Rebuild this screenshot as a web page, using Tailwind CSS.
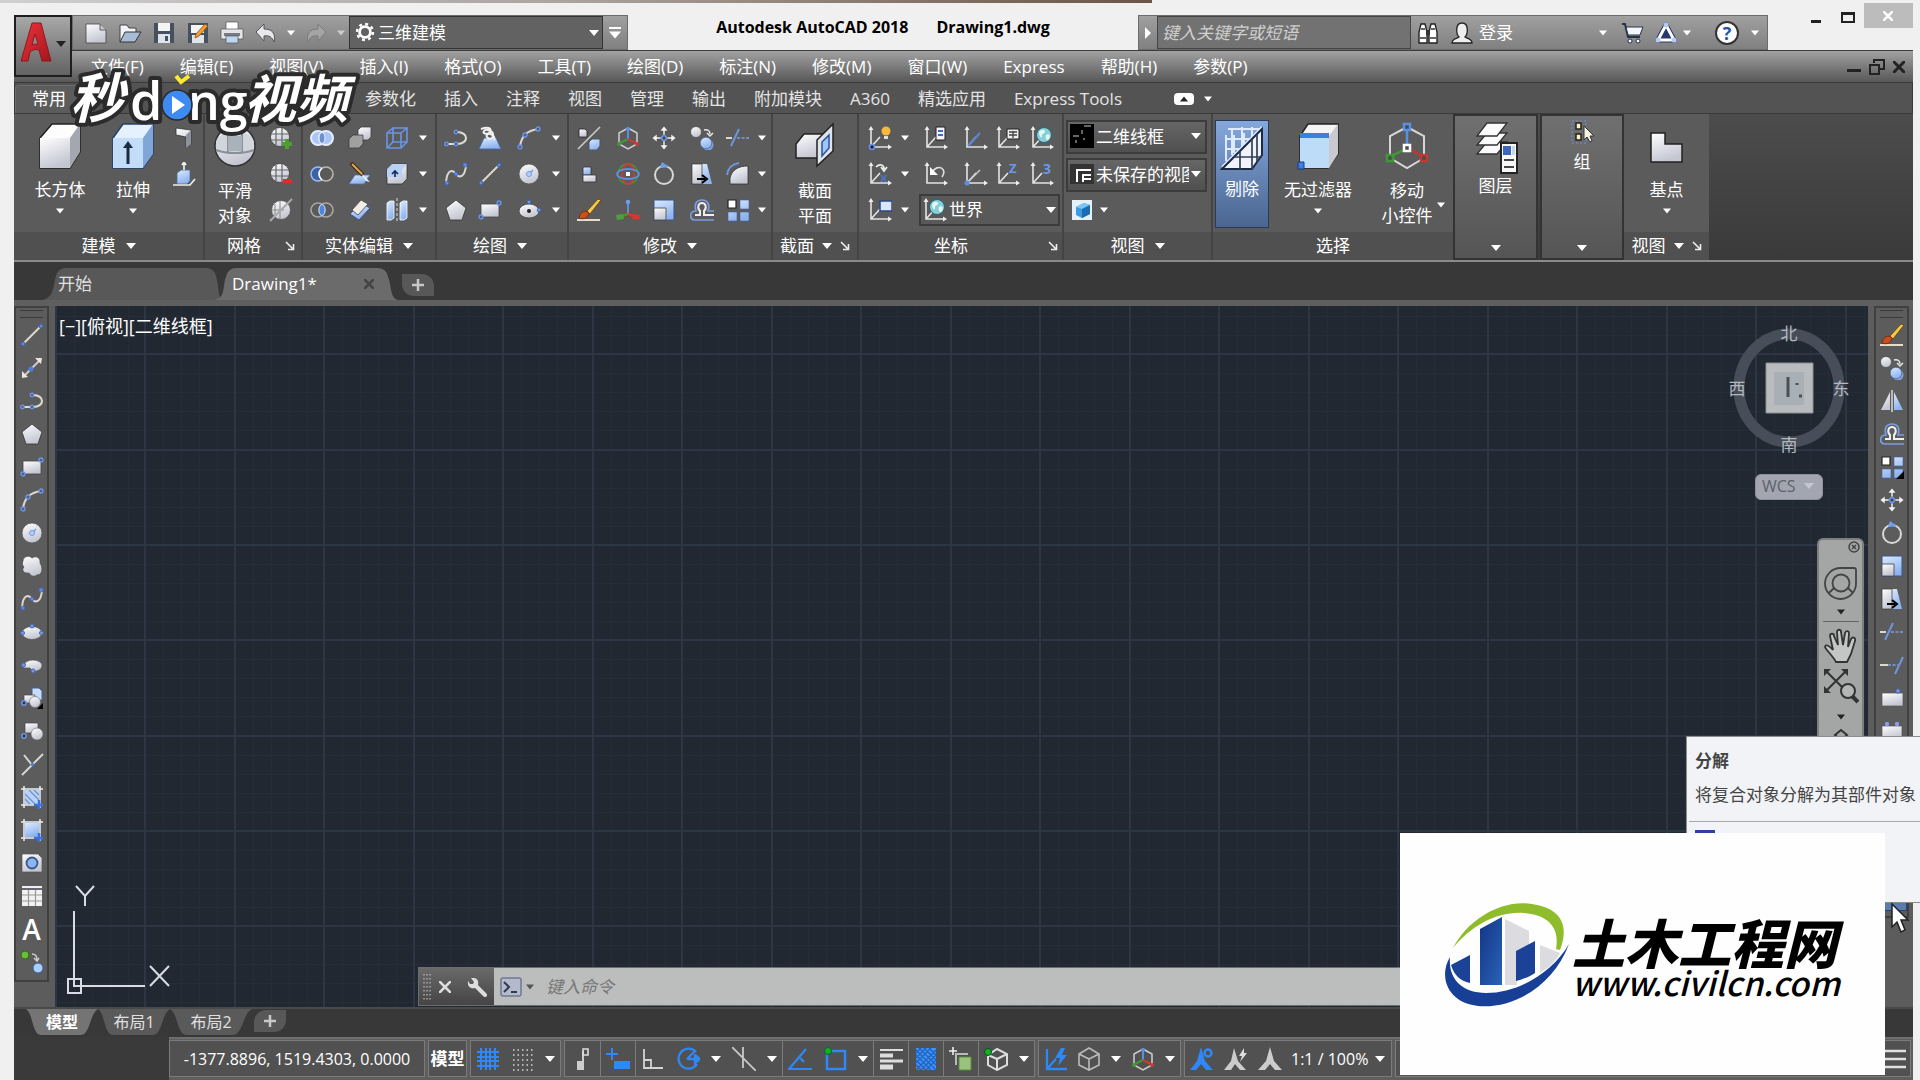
<!DOCTYPE html>
<html lang="zh-CN">
<head>
    <meta charset="UTF-8">
    <meta name="viewport" content="width=device-width, initial-scale=1.0">
    <title>Autodesk AutoCAD 2018 - Drawing1.dwg</title>
    <script src="https://cdn.jsdelivr.net/npm/@tailwindcss/browser@4"></script>
</head>
<body class="relative h-screen overflow-hidden bg-[#f0f0f0] font-['Open_Sans','Noto_Sans_CJK_SC',sans-serif] text-[17px] leading-6 text-white">

    <!-- Иконки -->
    <svg class="absolute h-0 w-0" aria-hidden="true">
        <defs>
            <linearGradient id="gw" x1="0" y1="0" x2="0.4" y2="1"><stop offset="0" stop-color="#fff"/><stop offset="1" stop-color="#c4c6d2"/></linearGradient>
            <linearGradient id="gb" x1="0" y1="0" x2="0.4" y2="1"><stop offset="0" stop-color="#dcebff"/><stop offset="1" stop-color="#8db2ee"/></linearGradient>
            <linearGradient id="gred" x1="0" y1="0" x2="1" y2="1"><stop offset="0" stop-color="#f0333a"/><stop offset="1" stop-color="#a4141c"/></linearGradient>
            <linearGradient id="gtower" x1="0" y1="0" x2="1" y2="1"><stop offset="0" stop-color="#123585"/><stop offset="1" stop-color="#2a62b8"/></linearGradient>
        </defs>
        <symbol id="down" viewBox="0 0 10 6"><path d="M0 0h10L5 6z" fill="currentColor"/></symbol>
        <symbol id="launch" viewBox="0 0 10 10"><path d="M1 1l7 7M8.500 3v5.500H3" fill="none" stroke="#eee" stroke-width="1.600"/></symbol>

        <!-- быстрый доступ -->
        <symbol id="new" viewBox="0 0 24 24"><path d="M2 3h14l6 6v13H2z" fill="url(#gw)" stroke="#444" stroke-width=".8"/><path d="M16 3v6h6" fill="#ccc" stroke="#444" stroke-width=".8"/></symbol>
        <symbol id="open" viewBox="0 0 24 24"><path d="M2 21V4h7l2 3h7v4" fill="#f4f4f8" stroke="#444"/><path d="M2 21l5-10h16l-6 10z" fill="#a9bcd6" stroke="#333"/></symbol>
        <symbol id="save" viewBox="0 0 24 24"><path d="M2 2h20v20H2z" fill="#46505e"/><path d="M6 2h12v8H6z" fill="#f4f4f4"/><path d="M6 13h12v9H6z" fill="#dfe3ea"/><path d="M13 15h3v5h-3z" fill="#46505e"/></symbol>
        <symbol id="saveas" viewBox="0 0 24 24"><path d="M2 2h20v20H2z" fill="#46505e"/><path d="M5 4h13v8H5z" fill="#f4f4f4"/><path d="M6 14h12v8H6z" fill="#dfe3ea"/><path d="M9 17l1-4L19 3l3 2-9 10z" fill="#f0a032" stroke="#8a4a12" stroke-width=".8"/></symbol>
        <symbol id="print" viewBox="0 0 24 24"><path d="M6 1h12v8H6z" fill="#fff" stroke="#555" stroke-width=".7"/><path d="M1 8h22v10H1z" fill="#e4e4e8" stroke="#555" stroke-width=".7"/><path d="M4 12h16v3H4z" fill="#777b86"/><path d="M6 15h12v7H6z" fill="#bcd6f2" stroke="#555" stroke-width=".7"/></symbol>
        <symbol id="undo" viewBox="0 0 24 24"><path d="M2 11l8-8v5c8 0 12 4 10 13-2-5-5-7-10-6v5z" fill="#e8e8ec" stroke="#555"/></symbol>
        <symbol id="redo" viewBox="0 0 24 24"><path d="M22 11l-8-8v5C6 8 2 12 4 21c2-5 5-7 10-6v5z" fill="#a4a4a4" stroke="#7b7b7b"/></symbol>
        <symbol id="gear" viewBox="0 0 24 24"><circle cx="12" cy="12" r="6.500" fill="none" stroke="#fff" stroke-width="3.400"/><circle cx="12" cy="12" r="9.500" fill="none" stroke="#fff" stroke-width="3" stroke-dasharray="3.500 3.960"/></symbol>
        <symbol id="binoc" viewBox="0 0 24 24"><path d="M3 22V11l2-8h4l2 8v11H3zM13 22V11l2-8h4l2 8v11h-8z" fill="#fff" stroke="#222" stroke-width="1.400"/><path d="M10 9h4v5h-4z" fill="#333"/><path d="M5 8h4M15 8h4M4 17h6M14 17h6" stroke="#333" stroke-width="1.300"/></symbol>
        <symbol id="user" viewBox="0 0 24 24"><path d="M2 22c0-4 4-4 7-6-3-3-4-14 3-14s6 11 3 14c3 2 7 2 7 6z" fill="#eee" stroke="#222" stroke-width="1.300"/></symbol>
        <symbol id="cart" viewBox="0 0 24 24"><path d="M2 3h3l3 13h12" fill="none" stroke="#26324a" stroke-width="2"/><path d="M6 6h17l-3 8H8z" fill="#f4f6fb" stroke="#26324a"/><circle cx="10" cy="20" r="2" fill="#fff" stroke="#26324a"/><circle cx="18" cy="20" r="2" fill="#fff" stroke="#26324a"/></symbol>
        <symbol id="cloud" viewBox="0 0 24 24"><g stroke="#26376b" fill="#fff"><path d="M12 4L4 19h16z" stroke-width="5" stroke-linejoin="round"/><path d="M12 4L4 19h16z" fill="#26376b" stroke="#fff" stroke-width="3" stroke-linejoin="round"/></g><circle cx="12" cy="4" r="2.500" fill="#b8caf4"/><circle cx="4" cy="19" r="2.500" fill="#b8caf4"/><circle cx="20" cy="19" r="2.500" fill="#b8caf4"/></symbol>

        <!-- рисование -->
        <symbol id="line" viewBox="0 0 24 24"><path d="M3 21L21 3" stroke="#ddd8cf" stroke-width="2"/><g fill="#6a8cd8" stroke="#3b5dae"><circle cx="3" cy="21" r="2"/><circle cx="21" cy="3" r="2"/></g></symbol>
        <symbol id="xline" viewBox="0 0 24 24"><path d="M5 19L19 5" stroke="#ccc" stroke-width="2"/><path d="M2 22v-7l6 6zM22 2h-7l6 6z" fill="#eee6d8"/><circle cx="11" cy="13" r="2.500" fill="#4d7fe0"/></symbol>
        <symbol id="pline" viewBox="0 0 24 24"><path d="M2 18h11c12 0 12-12 0-12" fill="none" stroke="#e0dcd4" stroke-width="2"/><g fill="#50607e" stroke="#6d94ea" stroke-width="1.300"><circle cx="2.500" cy="18" r="1.800"/><circle cx="12" cy="18" r="1.800"/><circle cx="12" cy="6" r="1.800"/></g></symbol>
        <symbol id="polygon" viewBox="0 0 24 24"><path d="M12 2l10 8-4 12H6L2 10z" fill="url(#gw)" stroke="#333" stroke-width=".8"/></symbol>
        <symbol id="rect" viewBox="0 0 24 24"><path d="M3 6h18v13H3z" fill="url(#gw)" stroke="#444" stroke-width=".8"/><g fill="#50607e" stroke="#6d94ea" stroke-width="1.300"><circle cx="3" cy="19" r="2"/><circle cx="21" cy="5" r="2"/></g></symbol>
        <symbol id="arc" viewBox="0 0 24 24"><path d="M3 21C4 10 11 4 22 3" fill="none" stroke="#ddd8cf" stroke-width="2"/><g fill="#50607e" stroke="#6d94ea" stroke-width="1.300"><circle cx="3" cy="21" r="2"/><circle cx="8" cy="9" r="2"/><circle cx="21" cy="3" r="2"/></g></symbol>
        <symbol id="circle" viewBox="0 0 24 24"><circle cx="12" cy="12" r="10" fill="url(#gw)" stroke="#555" stroke-width=".7"/><path d="M12 12l4-4" stroke="#6f9be6" stroke-width="1.500"/><circle cx="12" cy="12" r="2.500" fill="#b6d2f6" stroke="#6f9be6"/></symbol>
        <symbol id="revcloud" viewBox="0 0 24 24"><path d="M3 7c0-5 7-6 9-3 4-3 9 0 8 5 3 4 3 12-3 12-4 3-7 0-8-2-5 1-8-3-5-6-2-2-2-4-1-6z" fill="url(#gw)" stroke="#444" stroke-width=".7"/></symbol>
        <symbol id="spline" viewBox="0 0 24 24"><path d="M2 21C3 6 9 8 12 12s9 4 10-9" fill="none" stroke="#ddd8cf" stroke-width="2"/><g fill="#6a8cd8" stroke="#3b6dde"><circle cx="3" cy="21" r="1.800"/><circle cx="12" cy="12" r="1.800"/><circle cx="21" cy="3" r="2"/></g></symbol>
        <symbol id="ellipse" viewBox="0 0 24 24"><ellipse cx="12" cy="13" rx="10" ry="6.500" fill="url(#gw)" stroke="#555" stroke-width=".7"/><g fill="#7a98dc" stroke="#4466b4"><circle cx="2.500" cy="13" r="2"/><circle cx="12" cy="6" r="2"/><circle cx="21.500" cy="13" r="2"/></g></symbol>
        <symbol id="ellipse2" viewBox="0 0 24 24"><ellipse cx="12" cy="13" rx="10" ry="7" fill="url(#gw)" stroke="#444" stroke-width=".8"/><circle cx="12" cy="13" r="2" fill="#222"/><g fill="#7a98dc" stroke="#4466b4"><circle cx="12" cy="4" r="1.800"/><circle cx="22" cy="12" r="1.800"/></g></symbol>
        <symbol id="earc" viewBox="0 0 24 24"><path d="M4 12c2-7 17-6 18 0 0 5-5 7-10 6l-2-3H3z" fill="url(#gw)" stroke="#555" stroke-width=".7"/><g fill="#7a98dc" stroke="#4466b4"><circle cx="3.500" cy="12" r="2"/><circle cx="13" cy="18" r="2"/></g></symbol>
        <symbol id="insert" viewBox="0 0 24 24"><path d="M12 2h7l3 3v9H12z" fill="#c6defc" stroke="#44608c"/><path d="M4 9h11v8H4z" fill="url(#gw)" stroke="#444" stroke-width=".7"/><circle cx="15" cy="16" r="5.500" fill="url(#gw)" stroke="#666" stroke-width=".6"/><circle cx="4" cy="17" r="2.200" fill="#333" stroke="#6d94ea" stroke-width="1.500"/><path d="M23 17v6h-6z" fill="#000"/></symbol>
        <symbol id="block" viewBox="0 0 24 24"><path d="M5 4h13v10H5z" fill="url(#gw)" stroke="#444" stroke-width=".7"/><circle cx="17" cy="15" r="6" fill="url(#gw)" stroke="#666" stroke-width=".6"/><circle cx="4" cy="17" r="2.200" fill="#333" stroke="#6d94ea" stroke-width="1.500"/></symbol>
        <symbol id="point" viewBox="0 0 24 24"><path d="M2 23L23 2M4 3l8 10" stroke="#d5d5d5" stroke-width="2"/><circle cx="12.500" cy="12.500" r="1.800" fill="#4d7fe0"/></symbol>
        <symbol id="hatch" viewBox="0 0 24 24"><path d="M5 5h14v14H5z" fill="#b9d3fa"/><path d="M5 9l10 10M9 5l10 10M5 14l5 5M14 5l5 5" stroke="#6d90c8" stroke-width="1.200"/><path d="M1 4h22M4 1v22M20 1v22M1 20h22" stroke="#eee" stroke-width="1.500"/><path d="M14 20h9M19 15v9" stroke="#3b72dc" stroke-width="2.500"/></symbol>
        <symbol id="gradient" viewBox="0 0 24 24"><path d="M5 5h14v14H5z" fill="url(#gb)"/><path d="M1 4h22M4 1v22M20 1v22M1 20h22" stroke="#eee" stroke-width="1.500"/><path d="M14 20h9M19 15v9" stroke="#3b72dc" stroke-width="2.500"/></symbol>
        <symbol id="region" viewBox="0 0 24 24"><path d="M2 3h16l4 4v14H2z" fill="url(#gw)" stroke="#555" stroke-width=".7"/><circle cx="12" cy="12" r="5.500" fill="#8bb6f4" stroke="#3c5688" stroke-width="1.800"/></symbol>
        <symbol id="table" viewBox="0 0 24 24"><path d="M2 2h20v20H2z" fill="#f1f1f1"/><path d="M2 5h20" stroke="#667" stroke-width="2"/><path d="M2 11h20M2 17h20M8.500 6v16M15.500 6v16" stroke="#999" stroke-width="1.200"/></symbol>
        <symbol id="addsel" viewBox="0 0 24 24"><circle cx="5" cy="5" r="4" fill="#6dbb3c" stroke="#2f6b16"/><circle cx="18" cy="18" r="5" fill="#a8d0fb" stroke="#39618f"/><path d="M12 4c4 0 5 2 5 6m-3-2l3 3 2-3" fill="none" stroke="#ccc" stroke-width="1.500"/></symbol>
        <symbol id="helix" viewBox="0 0 24 24"><path d="M6 12h12l5 11H1z" fill="url(#gb)" stroke="#3f66a8" stroke-width=".8"/><g fill="none" stroke="#f1f1f1" stroke-width="2"><path d="M3 3c8-3 11 0 9 3S4 8 6 5s10 0 9 5-8 2-6-1 9 1 7 5"/></g></symbol>

        <!-- редактирование -->
        <symbol id="erase" viewBox="0 0 24 24"><path d="M0 22h23" stroke="#e8dcc8" stroke-width="2"/><path d="M10 13L21 1l3 1-11 14z" fill="#f5c64a" stroke="#5d3a10" stroke-width=".8"/><path d="M2 20c1-6 6-9 10-5-1 5-5 7-10 5z" fill="#c8501c" stroke="#6c2308" stroke-width=".8"/></symbol>
        <symbol id="copy" viewBox="0 0 24 24"><circle cx="6" cy="6" r="5.500" fill="url(#gw)" stroke="#444" stroke-width=".7"/><circle cx="18" cy="19" r="5.500" fill="#7d9fdc"/><circle cx="16" cy="17" r="5.800" fill="url(#gb)" stroke="#46648f" stroke-width=".7"/><path d="M14 4c4-1 6 1 6 4m-3-1l3 3 3-3" fill="none" stroke="#e6e6e6" stroke-width="1.500"/></symbol>
        <symbol id="mirror" viewBox="0 0 24 24"><path d="M10 3v18H1z" fill="url(#gw)"/><path d="M14 3v18h9z" fill="url(#gb)"/><path d="M12 1v22" stroke="#ddd" stroke-width="1.500"/></symbol>
        <symbol id="offset" viewBox="0 0 24 24"><path d="M24 13h-6c2-6 0-11-6-11S4 7 6 13c-7 0-7 9-1 9h19" fill="none" stroke="#7b9de0" stroke-width="1.700"/><path d="M24 17h-10v-4c3-3 2-8-2-8s-5 5-2 8v4H5" fill="none" stroke="#eee" stroke-width="2"/></symbol>
        <symbol id="array" viewBox="0 0 24 24"><path d="M2 2h8v8H2z" fill="#fff" stroke="#222" stroke-width="1.200"/><path d="M14 2h9v9h-9zM2 14h9v9H2zM14 14h9v9h-9z" fill="url(#gb)" stroke="#41629a" stroke-width=".6"/></symbol>
        <symbol id="arrayd" viewBox="0 0 24 24"><path d="M2 2h8v8H2z" fill="#fff" stroke="#222" stroke-width="1.200"/><path d="M14 2h9v9h-9zM2 14h9v9H2zM14 14h9v9h-9z" fill="url(#gb)" stroke="#41629a" stroke-width=".6"/><path d="M24 16v8h-8z" fill="#000"/></symbol>
        <symbol id="move" viewBox="0 0 24 24"><path d="M12 0l4 5h-3v4h-2V5H8zM12 24l4-5h-3v-4h-2v4H8zM0 12l5-4v3h4v2H5v3zM24 12l-5-4v3h-4v2h4v3z" fill="#f2f2f2" stroke="#444" stroke-width=".5"/><circle cx="12" cy="12" r="2.300" fill="#344" stroke="#6d94ea" stroke-width="1.600"/></symbol>
        <symbol id="rotate" viewBox="0 0 24 24"><circle cx="12" cy="13" r="9" fill="none" stroke="#d8d8d8" stroke-width="2"/><path d="M8 6l2-6 7 5z" fill="#6ea0f0"/></symbol>
        <symbol id="scale" viewBox="0 0 24 24"><path d="M2 2h20v20H2z" fill="url(#gb)" stroke="#35568f"/><path d="M2 10h12v12H2z" fill="url(#gw)" stroke="#444" stroke-width=".8"/></symbol>
        <symbol id="stretch" viewBox="0 0 24 24"><path d="M11 2h6l5 20H11z" fill="url(#gb)"/><path d="M2 2h10v20H2z" fill="url(#gw)" stroke="#333" stroke-width=".7"/><path d="M7 17h8m-3-4l5 4-5 4" stroke="#000" stroke-width="2" fill="none"/></symbol>
        <symbol id="trim" viewBox="0 0 24 24"><path d="M0 12h6" stroke="#ddd8cf" stroke-width="2"/><path d="M5 20l8-17" stroke="#6f95dc" stroke-width="2"/><path d="M11 12h13" stroke="#7da0dd" stroke-width="1.600" stroke-dasharray="3 1.500"/></symbol>
        <symbol id="extend" viewBox="0 0 24 24"><path d="M0 12h8" stroke="#ddd8cf" stroke-width="2"/><path d="M15 21l8-17" stroke="#6f95dc" stroke-width="2"/><path d="M8 12h10" stroke="#7da0dd" stroke-width="1.600" stroke-dasharray="3 1.500"/></symbol>
        <symbol id="brk1" viewBox="0 0 24 24"><path d="M2 7h21v13H2z" fill="url(#gw)" stroke="#555" stroke-width=".7"/><circle cx="18" cy="5" r="2.200" fill="#7a9ae0" stroke="#3f5fae"/></symbol>
        <symbol id="brk2" viewBox="0 0 24 24"><path d="M2 7h20v13H2z" fill="url(#gw)" stroke="#555" stroke-width=".7"/><g fill="#8a9ce8"><circle cx="7" cy="5" r="2.200"/><circle cx="17" cy="5" r="2.200"/></g></symbol>
        <symbol id="fillet" viewBox="0 0 24 24"><path d="M4 22V16C6 8 12 4 22 4v18z" fill="url(#gw)" stroke="#333" stroke-width=".8"/><path d="M1 13C2 6 6 2 13 1" fill="none" stroke="#6f95dc" stroke-width="1.800"/></symbol>
        <symbol id="m3d" viewBox="0 0 24 24"><path d="M1 23L23 1" stroke="#ccc" stroke-width="1.600"/><path d="M2 3h6l2 2v6H2z" fill="url(#gw)" stroke="#222" stroke-width=".8"/><path d="M12 16l3-3h8v7l-3 4h-8z" fill="url(#gb)" stroke="#456"/></symbol>
        <symbol id="gizmo" viewBox="0 0 24 24"><path d="M12 2l9 5v11l-9 5-9-5V7z" fill="none" stroke="#cfcfcf" stroke-width="1.500"/><path d="M12 3v10" stroke="#5b8fe6" stroke-width="2"/><path d="M12 13l-8 4" stroke="#3d9a34" stroke-width="2"/><path d="M12 13l8 4" stroke="#d03a32" stroke-width="2"/><circle cx="12" cy="3" r="2" fill="#5b8fe6"/><circle cx="3" cy="18" r="2" fill="#3d9a34"/><circle cx="21" cy="18" r="2" fill="#d03a32"/></symbol>
        <symbol id="orbit" viewBox="0 0 24 24"><circle cx="12" cy="12" r="10" fill="none" stroke="#3d9a34" stroke-width="1.500"/><ellipse cx="12" cy="12" rx="6" ry="10" fill="none" stroke="#d03a32" stroke-width="1.800"/><ellipse cx="12" cy="12" rx="11" ry="5" fill="none" stroke="#5b8fe6" stroke-width="1.800"/><path d="M10 10h4v4h-4z" fill="#fff"/></symbol>
        <symbol id="scale3" viewBox="0 0 24 24"><path d="M12 9l7 11H5z" fill="#7a4a3c"/><path d="M12 4v12" stroke="#5b8fe6" stroke-width="2"/><path d="M12 16l-9 3" stroke="#3d9a34" stroke-width="2.500"/><path d="M12 16l9 3" stroke="#d03a32" stroke-width="2.500"/><path d="M0 17l7-1 1 5-7 1z" fill="#4aa23a"/><path d="M17 16l7 1-1 5-7-1z" fill="#d8352e"/><circle cx="12" cy="4" r="2.300" fill="#6f9be8"/></symbol>
        <symbol id="align" viewBox="0 0 24 24"><path d="M6 5h8v8H6z" fill="url(#gb)" stroke="#333" stroke-width=".8"/><path d="M6 13h13v7H6z" fill="url(#gw)" stroke="#333" stroke-width=".8"/></symbol>

        <!-- тела и сети -->
        <symbol id="polysolid" viewBox="0 0 24 24"><path d="M4 2l15 2v14l-5 4V11L4 9z" fill="url(#gw)" stroke="#333" stroke-width=".8"/><path d="M14 9l5-5v14l-5 4z" fill="#8d929c"/></symbol>
        <symbol id="presspull" viewBox="0 0 24 24"><path d="M5 11l4-3h9v11l-3 3H5z" fill="url(#gb)" stroke="#49648d" stroke-width=".8"/><path d="M12 8V1m-2 2l2-3 2 3M1 23h17l5-6" stroke="#eee" stroke-width="1.700" fill="none"/></symbol>
        <symbol id="ball" viewBox="0 0 24 24"><circle cx="11" cy="11" r="9.500" fill="url(#gw)" stroke="#333" stroke-width=".7"/><path d="M2 8h18M2 14h18M7 3v16M13 2v18" stroke="#666" stroke-width="1.200"/></symbol>
        <symbol id="meshplus" viewBox="0 0 24 24"><use href="#ball"/><path d="M18 13v10M13 18h10" stroke="#4f9e34" stroke-width="4"/></symbol>
        <symbol id="meshminus" viewBox="0 0 24 24"><use href="#ball"/><path d="M14 19h9" stroke="#d6302a" stroke-width="4"/></symbol>
        <symbol id="meshref" viewBox="0 0 24 24"><circle cx="12" cy="12" r="9.500" fill="url(#gw)" stroke="#555" stroke-width=".8"/><path d="M6 6v11M11 3v18M3 12h12" stroke="#888"/><path d="M1 23L23 1" stroke="#aaa" stroke-width="2"/></symbol>
        <symbol id="union" viewBox="0 0 24 24"><g fill="#a9c6f6" stroke="#e6eefc" stroke-width="2"><circle cx="8" cy="12" r="7"/><circle cx="16" cy="12" r="7"/></g><ellipse cx="12" cy="12" rx="3" ry="5.500" fill="#6d90d0" stroke="#e6eefc"/></symbol>
        <symbol id="subtract" viewBox="0 0 24 24"><circle cx="8" cy="12" r="7" fill="#3c62a8" stroke="#9bbcf2" stroke-width="1.500"/><circle cx="16" cy="12" r="7" fill="#5a5a5a" stroke="#bdb6ac" stroke-width="1.600"/><path d="M12 6c-4 4-4 8 0 12" fill="none" stroke="#fff" stroke-width="1.400"/></symbol>
        <symbol id="intersect" viewBox="0 0 24 24"><g fill="none" stroke="#aaa6a0" stroke-width="1.600"><circle cx="8" cy="12" r="7"/><circle cx="16" cy="12" r="7"/></g><ellipse cx="12" cy="12" rx="3" ry="5.500" fill="#4c84e0" stroke="#bcd4fa"/></symbol>
        <symbol id="extract" viewBox="0 0 24 24"><path d="M10 4l3-3h10v10l-3 3H10z" fill="url(#gw)" stroke="#333" stroke-width=".7"/><path d="M1 13l4-4h10v9l-4 4H1z" fill="#a0a0a0" stroke="#333" stroke-width=".7"/></symbol>
        <symbol id="slice" viewBox="0 0 24 24"><path d="M1 22l6-9h15l-6 9z" fill="url(#gb)" stroke="#4b6ea8" stroke-width=".8"/><path d="M3 1l12 12" stroke="#3b2a14" stroke-width="4"/><path d="M4 2l10 10" stroke="#e0a94e" stroke-width="2"/><path d="M13 11l9 9-4-1z" fill="#f4f4f4"/></symbol>
        <symbol id="thicken" viewBox="0 0 24 24"><path d="M2 16L13 5l9 5-11 12z" fill="url(#gb)" stroke="#35568f"/><path d="M4 12l9-10 7 4-10 11z" fill="#f1ede4" stroke="#444" stroke-width=".8"/></symbol>
        <symbol id="wire" viewBox="0 0 24 24"><path d="M2 7h14v15H2zM8 2h14v14H8zM2 7l6-5M16 7l6-5M16 22l6-6M2 22l6-6" fill="none" stroke="#6c94e6" stroke-width="1.600"/></symbol>
        <symbol id="shell" viewBox="0 0 24 24"><path d="M2 7l5-5h15v15l-5 5H2z" fill="url(#gw)" stroke="#333" stroke-width=".8"/><path d="M2 7l5-5h15l-4 5zM2 7h15v8H2z" fill="#b7d0f5"/><path d="M10 15V9m-3 3l3-3 3 3" fill="none" stroke="#1c2c50" stroke-width="1.700"/></symbol>
        <symbol id="separate" viewBox="0 0 24 24"><path d="M2 5l3-2h4v17l-3 2H2z" fill="url(#gb)" stroke="#fff" stroke-width=".8"/><path d="M15 5l3-2h4v17l-3 2h-4z" fill="url(#gb)" stroke="#fff" stroke-width=".8"/><path d="M12 0v24" stroke="#ddd" stroke-dasharray="3 2"/></symbol>

        <!-- ПСК -->
        <symbol id="axes" viewBox="0 0 24 24"><path d="M3 2v19h19M3 21l9-10" fill="none" stroke="#e4e4e4" stroke-width="1.600"/><path d="M3 0l2.500 4h-5zM24 21l-4-2.500v5z" fill="#eee"/></symbol>
        <symbol id="ucs3p" viewBox="0 0 24 24"><use href="#axes"/><circle cx="4" cy="21" r="2.500" fill="#223" stroke="#6d94ea" stroke-width="1.600"/><circle cx="18" cy="5" r="4.500" fill="#f7b93c"/><path d="M16 10h4v3h-4z" fill="#ddd"/></symbol>
        <symbol id="ucsname" viewBox="0 0 24 24"><use href="#axes"/><path d="M12 1h9v13h-9z" fill="#f4f4f4" stroke="#222"/><path d="M14 5h5M14 9h5" stroke="#3b6cc8" stroke-width="2"/></symbol>
        <symbol id="ucsz" viewBox="0 0 24 24"><use href="#axes"/><path d="M4 20L16 7" stroke="#5a86d6" stroke-width="2"/></symbol>
        <symbol id="ucsicon" viewBox="0 0 24 24"><use href="#axes"/><path d="M11 3h12v10H11z" fill="#eee" stroke="#222"/><path d="M13 6h8M13 9h8M17 5v7" stroke="#444" stroke-width="1.300"/></symbol>
        <symbol id="ucsworld" viewBox="0 0 24 24"><use href="#axes"/><circle cx="14" cy="9" r="7.500" fill="#86cfd8" stroke="#2d5f74"/><path d="M9 6c3-4 7-2 6 0s-3 1-3 4-3 1-3-4zM16 9c3-2 5 1 3 4s-4-1-3-4z" fill="#e4f6f2"/></symbol>
        <symbol id="ucsx" viewBox="0 0 24 24"><use href="#axes"/><path d="M8 5c4-4 8-2 8 2m-3-2l3 4 3-4" fill="none" stroke="#f1f1f1" stroke-width="1.700"/><text x="12" y="20" font-size="13" font-weight="700" fill="#4d74b8">x</text></symbol>
        <symbol id="ucsprev" viewBox="0 0 24 24"><path d="M3 2v19h19" fill="none" stroke="#e4e4e4" stroke-width="1.600"/><path d="M3 0l2.500 4h-5zM24 21l-4-2.500v5z" fill="#eee"/><path d="M8 10c6-9 16-3 10 5" fill="none" stroke="#ddd" stroke-width="1.700"/><path d="M6 5v8h8z" fill="#fff"/></symbol>
        <symbol id="ucsorg" viewBox="0 0 24 24"><use href="#axes"/><path d="M3 21L16 8" stroke="#ccc" stroke-width="1.400"/><circle cx="3" cy="21" r="2.500" fill="#5b8fe6"/></symbol>
        <symbol id="ucszz" viewBox="0 0 24 24"><use href="#axes"/><text x="13" y="11" font-size="13" font-weight="700" fill="#6a98ec">Z</text></symbol>
        <symbol id="ucs3" viewBox="0 0 24 24"><use href="#axes"/><text x="13" y="12" font-size="14" font-weight="700" fill="#6a98ec">3</text></symbol>
        <symbol id="ucsview" viewBox="0 0 24 24"><use href="#axes"/><path d="M12 3h12v10H12z" fill="#d9e6fb" stroke="#2c4a86" stroke-width="1.500"/></symbol>

        <!-- большие кнопки -->
        <symbol id="box" viewBox="0 0 44 48"><path d="M2 16L14 2h28v28L32 46H2z" fill="#fdfdfd" stroke="#222" stroke-width="1.500"/><path d="M2 16h30v30H2z" fill="url(#gw)"/><path d="M32 16L42 2v28L32 46z" fill="#a5a7b0"/></symbol>
        <symbol id="extrude" viewBox="0 0 44 48"><path d="M2 16L12 2h30v30L32 46H2z" fill="#e6f1ff" stroke="#22406e" stroke-width="1.500"/><path d="M2 16h30v30H2z" fill="#c3dcf8"/><path d="M32 16L42 2v30L32 46z" fill="#7fa6d6"/><path d="M17 42V24" stroke="#1d2b44" stroke-width="3"/><path d="M12 26l5-7 5 7z" fill="#1d2b44"/></symbol>
        <symbol id="smooth" viewBox="0 0 44 48"><circle cx="22" cy="24" r="20" fill="url(#gw)" stroke="#333" stroke-width="1.500"/><path d="M3 20c4-14 34-14 38 0v8C30 32 14 32 3 28z" fill="#d0d6dc"/><path d="M15 12v18M29 12v18M3 28c10 4 28 4 38 0" fill="none" stroke="#8a9098" stroke-width="2"/><path d="M15 14h14v15H15z" fill="#a9b1ba"/></symbol>
        <symbol id="section" viewBox="0 0 44 48"><path d="M3 22l8-10h22v20l-6 4H3z" fill="url(#gw)" stroke="#222" stroke-width="1.500"/><path d="M24 18L40 2v27L24 44z" fill="#dfe3ea" stroke="#222" stroke-width="1.500"/><path d="M29 20l7-7v13l-7 8z" fill="#9fc6f8" stroke="#29539a" stroke-width="1.500"/></symbol>
        <symbol id="cull" viewBox="0 0 44 48"><path d="M12 4v26M22 2v30M32 2v14M6 10v26M14 10v18M24 8v12M6 14h24M8 4h34M6 24h16M10 34l8-6M2 42L42 2" fill="none" stroke="#dfeaff" stroke-width="2"/><path d="M2 44L42 4v26L32 44z" fill="#f1f3f8" stroke="#1c2a44" stroke-width="2"/><path d="M20 26v18M32 14v30M14 32h28M37 9v28" stroke="#33405c" stroke-width="1.700"/></symbol>
        <symbol id="nofilter" viewBox="0 0 44 48"><path d="M4 14L12 2h30v30L32 46H4z" fill="#f4f4f4" stroke="#222" stroke-width="1.500"/><path d="M4 14h29v32H4z" fill="#bcdcf8"/><path d="M33 14L42 2v30l-9 14z" fill="#c9c9cf"/><path d="M4 11h29v5H4z" fill="#3d7de6"/><path d="M2 40h6v7H2z" fill="#3d7de6" stroke="#1b3c78"/></symbol>
        <symbol id="gizmobig" viewBox="0 0 44 48"><path d="M22 5l17 9v22l-17 10L5 36V14z" fill="none" stroke="#d6d6d6" stroke-width="2"/><path d="M22 5v21" stroke="#5b8fe6" stroke-width="2.500"/><path d="M22 26L5 35" stroke="#3d9a34" stroke-width="2.500"/><path d="M22 26l17 9" stroke="#c03a32" stroke-width="2.500"/><g fill="#4a4a4a" stroke-width="2.500"><path d="M19 2h6v6h-6z" stroke="#5b8fe6"/><path d="M2 33h6v6H2z" stroke="#3d9a34"/><path d="M36 33h6v6h-6z" stroke="#c03a32"/><path d="M19 23h6v6h-6z" stroke="#fff"/></g></symbol>
        <symbol id="layers" viewBox="0 0 44 54"><g fill="#fafafa" stroke="#333" stroke-width="1.300"><path d="M3 34l10-12h20L23 34z"/><path d="M3 25l10-12h20L23 25z"/><path d="M3 16L13 3h20L23 16z"/></g><path d="M27 23h16v30H27z" fill="#f7f7f7" stroke="#222" stroke-width="2"/><path d="M29 26h8v9h-8z" fill="#3a66c0"/><path d="M38 26h3v9h-3z" fill="#c8d4e8"/><path d="M30 40h10M30 47h10" stroke="#444" stroke-width="2"/></symbol>
        <symbol id="group" viewBox="0 0 24 24"><path d="M2 1h14v22H2z" fill="none" stroke="#6c94e6" stroke-dasharray="2 2"/><path d="M6 3h5v6H6zM6 14h5v6H6z" fill="#fff3c0" stroke="#222" stroke-width="1.500"/><path d="M14 6v14l3-3 3 5 2-1-2-5h4z" fill="#f4f4e0" stroke="#333"/></symbol>
        <symbol id="basept" viewBox="0 0 44 48"><path d="M6 11h14v11h17v18H6z" fill="url(#gw)" stroke="#222" stroke-width="1.500"/></symbol>

        <!-- строка состояния -->
        <symbol id="sgrid" viewBox="0 0 24 24"><path d="M5 1v22M10 1v22M14 1v22M19 1v22M1 5h22M1 10h22M1 14h22M1 19h22" stroke="#2f88f5" stroke-width="2"/></symbol>
        <symbol id="sdots" viewBox="0 0 24 24"><path d="M3 3h20M3 8h20M3 13h20M3 18h20M3 23h20" stroke="#d6d6d6" stroke-width="1.500" stroke-dasharray="1.500 3"/></symbol>
        <symbol id="sinfer" viewBox="0 0 24 24"><path d="M12 15V4" stroke="#ddd" stroke-width="1.800"/><path d="M12 2h5v6h-5z" fill="none" stroke="#ddd" stroke-width="1.600"/><path d="M6 14h7v9H6z" fill="#ccc"/></symbol>
        <symbol id="sdyn" viewBox="0 0 24 24"><path d="M6 1v12M0 7h12" stroke="#2f88f5" stroke-width="2"/><path d="M8 14h16v8H8z" fill="#2f88f5"/></symbol>
        <symbol id="sortho" viewBox="0 0 24 24"><path d="M3 2v19h19M3 13h7v8" fill="none" stroke="#d4d4d4" stroke-width="1.800"/></symbol>
        <symbol id="spolar" viewBox="0 0 24 24"><path d="M20 5a10 10 0 1 0 1 12M11 12h13M11 12l8-8M24 12l-5-4v8z" fill="none" stroke="#2f88f5" stroke-width="2.300"/></symbol>
        <symbol id="siso" viewBox="0 0 24 24"><path d="M11 0v21M0 0l24 24" stroke="#c8c8c8" stroke-width="1.800"/></symbol>
        <symbol id="strack" viewBox="0 0 24 24"><path d="M24 22H1L18 2M12 11l4 4" fill="none" stroke="#2f88f5" stroke-width="2.200"/></symbol>
        <symbol id="sosnap" viewBox="0 0 24 24"><path d="M4 4h18v18H4z" fill="none" stroke="#2f88f5" stroke-width="2.500"/><circle cx="5" cy="4" r="3.500" fill="#17b01f" stroke="#063"/></symbol>
        <symbol id="slw" viewBox="0 0 24 24"><path d="M1 3h23" stroke="#ddd" stroke-width="2"/><path d="M1 8h13M1 9h13M1 14h23" stroke="#ddd" stroke-width="3"/><path d="M1 20h13" stroke="#ddd" stroke-width="5"/></symbol>
        <symbol id="strans" viewBox="0 0 24 24"><path d="M2 1h20v22H2z" fill="#3b93ff"/><path d="M2 3l20 20M2 8l15 15M2 13l10 10M2 18l5 5M5 1l17 17M10 1l12 12M15 1l7 7M22 3L2 23M17 1L2 16M12 1L2 11M7 1L2 6M22 8L7 23M22 13L12 23" stroke="#2260b4" stroke-width="1.200"/></symbol>
        <symbol id="scyc" viewBox="0 0 24 24"><path d="M10 10h12v13H10z" fill="#9bc27a" stroke="#5c8a40"/><path d="M7 18V7h12" fill="none" stroke="#b9b9b9" stroke-width="2"/><path d="M4 0v8M0 4h8" stroke="#eee" stroke-width="1.600"/></symbol>
        <symbol id="s3d" viewBox="0 0 24 24"><path d="M13 2l10 5v11l-10 5-9-5V8zM13 12v11M13 12l-9-4M13 12l10-5" fill="none" stroke="#ddd" stroke-width="2"/><circle cx="4" cy="5" r="3.500" fill="#17b01f" stroke="#052"/></symbol>
        <symbol id="sucs" viewBox="0 0 24 24"><path d="M3 2v20h20M3 22l9-10" fill="none" stroke="#2f88f5" stroke-width="2.300"/><path d="M17 1l-6 10h5l-2 8 9-11h-5l3-7z" fill="#2f88f5"/></symbol>
        <symbol id="scube" viewBox="0 0 24 24"><path d="M12 1l10 6v11l-10 5-10-5V7zM12 12v11M12 12L2 7M12 12l10-5" fill="none" stroke="#bbb" stroke-width="1.600"/></symbol>
        <symbol id="sanno" viewBox="0 0 24 24"><path d="M11 0l4 14 8 9h-7l-5-6-5 6H0l7-9z" fill="#2f88f5"/><circle cx="18" cy="6" r="3.500" fill="none" stroke="#2f88f5" stroke-width="2.500"/></symbol>
        <symbol id="sauto" viewBox="0 0 24 24"><path d="M10 1l4 13 8 9h-6l-5-6-4 6H0l7-9z" fill="#ccc"/><path d="M20 1l-5 8h3l-2 6 7-9h-3z" fill="#ddd"/></symbol>
        <symbol id="sscale" viewBox="0 0 24 24"><path d="M12 0l4 14 8 9h-7l-5-6-5 6H0l8-9z" fill="#ccc"/></symbol>
    </svg>

    <div class="h-[3px] w-3/5 bg-linear-to-r from-[#d0d0d0] via-[#aaa29d] to-[#6a5548]"></div>

    <div class="flex h-[calc(100vh-3px)] flex-col pr-[7px] pl-3.5">

        <!-- Заголовок окна -->
        <header class="relative flex h-[47px] shrink-0 items-end justify-between">
            <button aria-label="应用程序菜单" class="absolute top-3 left-0 z-10 flex h-[62px] w-[58px] items-center border-2 border-[#1e1e1e] bg-linear-to-b from-[#a8a8a8] to-[#636363] pl-1">
                <svg class="mb-2 h-10 w-8" viewBox="0 0 32 40"><path d="M12 1h9l10 38h-9l-3-11c-4-1-7 0-9 2l-2 9H1zM15 12l-3 11c3-1 4-1 6-1z" fill="url(#gred)" stroke="#8c1a1f"/></svg>
                <svg class="mb-1 ml-1 h-1.5 w-2.5 text-[#222]"><use href="#down"/></svg>
            </button>
            <div class="ml-[58px] flex h-[35px] items-center border border-[#6c6c6c] bg-linear-to-b from-[#a0a0a0] to-[#808080] pl-1.5">
                <div data-icons="new open save saveas print undo" class="flex [&>button]:w-[34px]"></div>
                <svg class="ml-1 h-1.5 w-2"><use href="#down"/></svg>
                <div data-icons="redo" class="flex pl-1 [&>button]:w-[34px]"></div>
                <svg class="mx-1 h-1.5 w-2 text-[#ccc]"><use href="#down"/></svg>
                <div class="relative h-[33px] w-[254px]">
                    <svg class="pointer-events-none absolute top-1.5 left-1.5 h-5 w-5"><use href="#gear"/></svg>
                    <select aria-label="工作空间" class="h-full w-full appearance-none border border-[#333] bg-[#626262] pl-7"><option>三维建模</option></select>
                    <svg class="pointer-events-none absolute top-3.5 right-1 h-1.5 w-2.5"><use href="#down"/></svg>
                </div>
                <button aria-label="自定义快速访问工具栏" class="flex w-6 flex-col items-center gap-0.5"><span class="h-0.5 w-3 bg-white"></span><svg class="h-2 w-3"><use href="#down"/></svg></button>
            </div>
            <h1 class="flex gap-7 self-center text-[16px] font-bold text-black"><span>Autodesk AutoCAD 2018</span><span>Drawing1.dwg</span></h1>
            <div class="flex self-stretch">
                <div class="flex h-[35px] items-center self-end border border-[#6c6c6c] bg-linear-to-b from-[#a0a0a0] to-[#808080]">
                    <svg class="mx-1.5 h-3 w-1.5" viewBox="0 0 6 12"><path d="M0 0l6 6-6 6z" fill="#fff"/></svg>
                    <input type="text" aria-label="搜索" placeholder="键入关键字或短语" class="h-[33px] w-[254px] border border-[#444] bg-[#727272] px-1 italic placeholder:text-[#cfcfcf]">
                    <div data-icons="binoc user" class="flex [&>button]:w-[34px]"></div>
                    <button class="w-[120px] text-left">登录</button>
                    <svg class="mr-2 h-1.5 w-2"><use href="#down"/></svg>
                    <div data-icons="cart cloud" class="flex [&>button]:w-[34px]"></div>
                    <svg class="mr-6 h-1.5 w-2"><use href="#down"/></svg>
                    <button aria-label="帮助" class="flex h-6 w-6 items-center justify-center rounded-full border-2 border-[#333] bg-white text-[18px] font-bold text-[#2456a8]">?</button>
                    <svg class="mr-2 ml-3 h-1.5 w-2"><use href="#down"/></svg>
                </div>
                <div class="ml-8 flex h-7 items-stretch text-[#222]">
                    <button aria-label="最小化" class="flex w-8 items-center justify-center"><span class="mt-2 h-[3px] w-2.5 bg-[#222]"></span></button>
                    <button aria-label="最大化" class="flex w-8 items-center justify-center"><span class="h-[11px] w-3.5 border-2 border-t-[3px] border-[#222]"></span></button>
                    <button aria-label="关闭" class="flex h-[25px] w-[49px] items-center justify-center bg-[#bcbcbc]"><svg class="h-2.5 w-2.5" viewBox="0 0 10 10"><path d="M0 0l10 10M10 0L0 10" stroke="#fff" stroke-width="2.500"/></svg></button>
                </div>
            </div>
        </header>

        <!-- Меню -->
        <nav class="flex h-8 shrink-0 items-center border-t border-[#3c3c3c] bg-linear-to-b from-[#a2a2a2] to-[#585858] pl-[77px]">
            <div data-menu="文件(F) 编辑(E) 视图(V) 插入(I) 格式(O) 工具(T) 绘图(D) 标注(N) 修改(M) 窗口(W) Express 帮助(H) 参数(P)" class="flex gap-9"></div>
            <div class="mr-2 ml-auto flex items-center gap-2">
                <button aria-label="最小化图形" class="mt-2 h-[3px] w-3.5 bg-[#222]"></button>
                <button aria-label="还原图形"><svg class="h-4 w-4" viewBox="0 0 16 16"><path d="M5 4V1h10v9h-4M1 6h9v9H1z" fill="none" stroke="#222" stroke-width="2"/></svg></button>
                <button aria-label="关闭图形"><svg class="h-3 w-3" viewBox="0 0 10 10"><path d="M0 0l10 10M10 0L0 10" stroke="#222" stroke-width="2.500"/></svg></button>
            </div>
        </nav>

        <!-- Вкладки ленты -->
        <div class="flex h-8 shrink-0 items-end border border-[#3a3a3a] bg-[#535353]">
            <button class="h-7 rounded-t-sm border border-b-0 border-[#6c6c6c] bg-[#5c5c5c] px-4 pb-0.5 text-left">常用</button>
            <div data-menu="参数化 插入 注释 视图 管理 输出 附加模块 A360 精选应用 Express&nbsp;Tools" class="mb-0.5 ml-[282px] flex gap-[28px] text-[#e4e4e4]"></div>
            <button aria-label="最小化功能区" class="mb-2 ml-[52px] flex items-center gap-2.5"><span class="flex h-3 w-5 items-center justify-center rounded-sm bg-white text-[#222]"><svg class="h-1.5 w-2 rotate-180"><use href="#down"/></svg></span><svg class="h-1.5 w-2"><use href="#down"/></svg></button>
        </div>

        <!-- Лента -->
        <div class="flex h-[148px] shrink-0 border-b-2 border-[#8a8a8a] bg-linear-to-b from-[#4c4c4c] to-[#3a3a3a]">
            <section class="flex w-[191px] flex-col border-r-2 border-[#444] bg-[#5b5b5b]">
                <div class="flex grow pl-2">
                    <button class="flex w-[76px] flex-col items-center pt-2"><svg class="h-12 w-11"><use href="#box"/></svg><span class="mt-2">长方体</span><svg class="mt-1.5 h-1.5 w-2"><use href="#down"/></svg></button>
                    <button class="flex w-[70px] flex-col items-center pt-2"><svg class="h-12 w-11"><use href="#extrude"/></svg><span class="mt-2">拉伸</span><svg class="mt-1.5 h-1.5 w-2"><use href="#down"/></svg></button>
                    <div data-icons="polysolid presspull" class="flex flex-col pt-1.5 [&>button]:h-9 [&>button]:w-8"></div>
                </div>
                <h2 class="flex h-[28px] items-center justify-center gap-2.5 bg-[#505050]">建模<svg class="h-2 w-2.5"><use href="#down"/></svg></h2>
            </section>
            <section class="flex w-[98px] flex-col border-r-2 border-[#444] bg-[#5b5b5b]">
                <div class="flex grow">
                    <button class="flex w-[60px] flex-col items-center pt-2 leading-[25px]"><svg class="h-12 w-11"><use href="#smooth"/></svg><span class="mt-2">平滑<br>对象</span></button>
                    <div data-icons="meshplus meshminus meshref" class="flex flex-col pt-1.5 [&>button]:h-9 [&>button]:w-8"></div>
                </div>
                <h2 class="flex h-[28px] items-center justify-end gap-6 bg-[#505050] pr-1.5">网格<svg class="h-2.5 w-2.5"><use href="#launch"/></svg></h2>
            </section>
            <section class="flex w-[134px] flex-col border-r-2 border-[#444] bg-[#5b5b5b]">
                <div data-icons="union extract wire down subtract slice shell down intersect thicken separate down" class="grid grow auto-rows-[36px] grid-cols-[38px_38px_36px_16px] pt-1.5"></div>
                <h2 class="flex h-[28px] items-center justify-center gap-2.5 bg-[#505050]">实体编辑<svg class="h-2 w-2.5"><use href="#down"/></svg></h2>
            </section>
            <section class="flex w-[132px] flex-col border-r-2 border-[#444] bg-[#5b5b5b]">
                <div data-icons="pline helix arc down spline line circle down polygon rect ellipse2 down" class="grid grow auto-rows-[36px] grid-cols-[38px_30px_48px_6px] pt-1.5"></div>
                <h2 class="flex h-[28px] items-center justify-center gap-2.5 bg-[#505050] pr-1">绘图<svg class="h-2 w-2.5"><use href="#down"/></svg></h2>
            </section>
            <section class="flex w-[204px] flex-col border-r-2 border-[#444] bg-[#5b5b5b]">
                <div data-icons="m3d gizmo move copy trim down align orbit rotate stretch fillet down erase scale3 scale offset array down" class="grid grow auto-rows-[36px] grid-cols-[40px_38px_34px_42px_30px_18px] pt-1.5"></div>
                <h2 class="flex h-[28px] items-center justify-center gap-2.5 bg-[#505050]">修改<svg class="h-2 w-2.5"><use href="#down"/></svg></h2>
            </section>
            <section class="flex w-[86px] flex-col border-r-2 border-[#444] bg-[#5b5b5b]">
                <button class="flex grow flex-col items-center pt-2 leading-[25px]"><svg class="h-12 w-11"><use href="#section"/></svg><span class="mt-2">截面<br>平面</span></button>
                <h2 class="flex h-[28px] items-center justify-center gap-2 bg-[#505050]">截面<svg class="h-2 w-2.5"><use href="#down"/></svg><svg class="h-2.5 w-2.5"><use href="#launch"/></svg></h2>
            </section>
            <section class="flex w-[205px] flex-col border-r-2 border-[#444] bg-[#5b5b5b]">
                <div class="flex grow flex-col">
                    <div data-icons="ucs3p down ucsname ucsz ucsicon ucsworld ucsx down ucsprev ucsorg ucszz ucs3" class="grid auto-rows-[36px] grid-cols-[42px_8px_54px_26px_38px_30px] pt-1.5"></div>
                    <div class="flex items-center">
                        <div data-icons="ucsview down" class="grid auto-rows-[36px] grid-cols-[42px_8px]"></div>
                        <div class="relative ml-2.5 h-8 w-[141px]">
                            <svg class="pointer-events-none absolute top-1 left-1 h-6 w-6"><use href="#ucsworld"/></svg>
                            <select aria-label="命名 UCS" class="h-full w-full appearance-none border-2 border-[#3c3c3c] bg-[#595959] pl-7"><option>世界</option></select>
                            <svg class="pointer-events-none absolute top-3 right-1 h-2 w-2.5"><use href="#down"/></svg>
                        </div>
                    </div>
                </div>
                <h2 class="flex h-[28px] items-center justify-end gap-20 bg-[#505050] pr-1">坐标<svg class="h-2.5 w-2.5"><use href="#launch"/></svg></h2>
            </section>
            <section class="flex w-[149px] flex-col border-r-2 border-[#444] bg-[#5b5b5b]">
                <div class="flex grow flex-col gap-1 pt-1.5 pr-1 pl-0.5">
                    <div class="relative h-[34px]">
                        <svg class="pointer-events-none absolute top-1 left-1 h-6 w-6" viewBox="0 0 24 24"><path d="M0 0h24v24H0z"/><path d="M14 2h7M12 6v4M3 12h6M6 16v3M14 14v2" stroke="#ccc"/></svg>
                        <select aria-label="视觉样式" class="h-full w-full appearance-none border-2 border-[#3c3c3c] bg-linear-to-b from-[#666] to-[#505050] pl-7"><option>二维线框</option></select>
                        <svg class="pointer-events-none absolute top-3 right-1.5 h-2 w-2.5"><use href="#down"/></svg>
                    </div>
                    <div class="relative h-[34px]">
                        <svg class="pointer-events-none absolute top-1.5 left-1 h-5 w-6" viewBox="0 0 24 20"><path d="M0 0h24v20H0z" fill="#333"/><path d="M7 18V6h14M13 18v-7h8M13 15h8" fill="none" stroke="#fff" stroke-width="2"/></svg>
                        <select aria-label="命名视图" class="h-full w-full appearance-none border-2 border-[#3c3c3c] bg-linear-to-b from-[#666] to-[#505050] pr-4 pl-7"><option>未保存的视图</option></select>
                        <svg class="pointer-events-none absolute top-3 right-1.5 h-2 w-2.5"><use href="#down"/></svg>
                    </div>
                    <button aria-label="视口配置" class="mt-1 ml-1.5 flex items-center gap-2"><svg class="h-5 w-5" viewBox="0 0 20 20"><path d="M0 0h20v20H0z" fill="#e4f1fb"/><path d="M4 7l8-4 6 2v9l-8 4-6-3z" fill="#3b9be0"/><path d="M4 7l6 2 8-4-6-2z" fill="#7cc4f4"/><path d="M10 9v9l8-4V5z" fill="#1c6cb4"/></svg><svg class="h-1.5 w-2"><use href="#down"/></svg></button>
                </div>
                <h2 class="flex h-[28px] items-center justify-center gap-2.5 bg-[#505050]">视图<svg class="h-2 w-2.5"><use href="#down"/></svg></h2>
            </section>
            <section class="flex w-[240px] flex-col bg-[#5b5b5b]">
                <div class="flex grow items-start">
                    <button class="mt-1.5 ml-0.5 flex h-[108px] w-[54px] flex-col items-center border border-[#2a3a58] bg-linear-to-b from-[#85a8dc] to-[#4a6590] pt-1"><svg class="h-12 w-11"><use href="#cull"/></svg><span class="mt-1">剔除</span></button>
                    <button class="ml-1 flex w-[90px] flex-col items-center pt-2"><svg class="h-12 w-11"><use href="#nofilter"/></svg><span class="mt-2">无过滤器</span><svg class="mt-1.5 h-1.5 w-2"><use href="#down"/></svg></button>
                    <button class="flex grow items-end pt-2 pl-2.5 leading-[25px]"><span class="flex w-[68px] flex-col items-center"><svg class="h-12 w-11"><use href="#gizmobig"/></svg><span class="mt-2 whitespace-nowrap">移动<br>小控件</span></span><svg class="-ml-1 mb-5 h-1.5 w-2"><use href="#down"/></svg></button>
                </div>
                <h2 class="flex h-[28px] items-center justify-center bg-[#505050]">选择</h2>
            </section>
            <button class="flex w-[85px] flex-col items-center border-2 border-[#333] bg-linear-to-b from-[#707070] to-[#555] pt-1"><svg class="h-[54px] w-11"><use href="#layers"/></svg><span>图层</span><svg class="mt-auto mb-1.5 h-2 w-2.5"><use href="#down"/></svg></button>
            <button class="ml-0.5 flex w-[84px] flex-col items-center border-2 border-[#333] bg-linear-to-b from-[#707070] to-[#555] pt-1"><svg class="h-6 w-6"><use href="#group"/></svg><span class="mt-1.5">组</span><svg class="mt-auto mb-1.5 h-2 w-2.5"><use href="#down"/></svg></button>
            <section class="flex w-[85px] flex-col bg-[#5b5b5b]">
                <button class="flex grow flex-col items-center pt-2"><svg class="h-12 w-11"><use href="#basept"/></svg><span class="mt-2">基点</span><svg class="mt-1.5 h-1.5 w-2"><use href="#down"/></svg></button>
                <h2 class="flex h-[28px] items-center justify-center gap-2 bg-[#505050]">视图<svg class="h-2 w-2.5"><use href="#down"/></svg><svg class="h-2.5 w-2.5"><use href="#launch"/></svg></h2>
            </section>
        </div>

        <!-- Вкладки чертежей -->
        <div class="flex h-[44px] shrink-0 items-end border-b-[6px] border-[#5f5f5f] bg-[#383838] pl-7">
            <button class="relative h-8 w-[180px] pl-4 text-left text-[#e0e0e0]">
                <svg class="absolute inset-0 h-full w-full" viewBox="0 0 180 32" preserveAspectRatio="none"><path d="M0 32C12 30 11 18 14 8Q16 0 24 0H164Q172 0 174 8C177 18 176 30 180 32z" fill="#585858"/></svg>
                <span class="relative">开始</span>
            </button>
            <button class="relative -ml-2 h-8 w-[184px] pl-[18px] text-left">
                <svg class="absolute inset-0 h-full w-full" viewBox="0 0 180 32" preserveAspectRatio="none"><path d="M0 32C12 30 8 18 12 8Q14 0 22 0H160Q168 0 170 8C174 18 172 30 180 32z" fill="#6b6b6b"/></svg>
                <span class="relative">Drawing1*</span>
                <svg class="absolute top-[11px] right-6 h-2.5 w-2.5" viewBox="0 0 10 10"><path d="M0 0l10 10M10 0L0 10" stroke="#444" stroke-width="2.500"/></svg>
            </button>
            <button aria-label="新图形" class="mb-1 ml-1 flex h-[22px] w-8 items-center justify-center rounded-tr-xl rounded-bl-xl bg-[#585858]"><svg class="h-3 w-3" viewBox="0 0 12 12"><path d="M6 0v12M0 6h12" stroke="#c8c8c8" stroke-width="2.500"/></svg></button>
        </div>

        <!-- Рабочая область -->
        <main class="flex min-h-0 grow bg-[#5c5c5c]">
            <div class="mr-1.5 mb-auto w-[35px] border-2 border-[#404040] pb-0.5">
                <div class="mx-1 mt-0.5 h-2 border-y border-[#3a3a3a]"></div>
                <div data-icons="line xline pline polygon rect arc circle revcloud spline ellipse earc insert block point hatch gradient region table text addsel" class="flex flex-col items-center [&>button]:h-[33px]"></div>
            </div>

            <div class="relative min-w-0 grow bg-[#212832]">
                <svg class="absolute inset-0 h-full w-full">
                    <defs>
                        <pattern id="minor" x="81" y="39" width="179" height="286" patternUnits="userSpaceOnUse">
                            <g transform="translate(9 9)" shape-rendering="crispEdges">
                                <path d="M18-9v286M36-9v286M54-9v286M72-9v286M108-9v286M126-9v286M144-9v286M162-9v286M-9 19h179M-9 38h179M-9 57h179M-9 76h179M-9 115h179M-9 134h179M-9 153h179M-9 172h179M-9 210h179M-9 229h179M-9 248h179M-9 267h179" stroke="#252d38"/>
                                <path d="M0-9v286M90-9v286M-9 0h179M-9 96h179M-9 191h179" stroke="#2d3645" stroke-width="2"/>
                            </g>
                        </pattern>
                    </defs>
                    <rect width="100%" height="100%" fill="url(#minor)"/>
                </svg>
                <div class="absolute top-2 left-1 text-[18px]">[−][俯视][二维线框]</div>

                <!-- значок ПСК -->
                <svg class="absolute bottom-3 left-3 h-[112px] w-[108px]" viewBox="0 0 108 112" fill="none" stroke="#d8dce4" stroke-width="2"><path d="M7 28v75h71M1 96h13v14H1zM9 3l9 10 9-10M18 13v10M83 83l19 20M102 83l-19 20"/></svg>

                <!-- видовой куб -->
                <svg class="absolute top-[15px] right-4 h-[134px] w-[130px]" viewBox="0 0 130 134">
                    <ellipse cx="67" cy="67" rx="50" ry="54" fill="none" stroke="#474e59" stroke-width="11"/>
                    <path d="M44 42h47v50H44z" fill="#b9bcbe" stroke="#8b9090"/><path d="M52 51h30v33H52z" fill="#a9b0b5"/>
                    <path d="M66 56v20M75 62v2M77 75h3" stroke="#4a5058" stroke-width="3"/>
                    <g fill="#b4b9c0" font-size="17" text-anchor="middle"><text x="67" y="19">北</text><text x="67" y="130">南</text><text x="15" y="74">西</text><text x="119" y="74">东</text></g>
                </svg>
                <button class="absolute top-[168px] right-[45px] flex h-[26px] w-[68px] items-center gap-2 rounded-md border border-[#8d919a] bg-[#a3a6b0] pb-0.5 pl-1.5 text-[16px] text-[#5d616c]">WCS<svg class="h-1.5 w-2.5 text-[#c4c7d0]"><use href="#down"/></svg></button>

                <!-- панель навигации -->
                <div class="absolute top-[232px] right-1 flex h-[320px] w-[47px] flex-col items-center rounded-md border-2 border-[#7c8080] bg-[#a4a6a6] text-[#222]">
                    <svg class="mt-px mr-0.5 h-3 w-3 self-end" viewBox="0 0 12 12" fill="none" stroke="#444" stroke-width="1.500"><circle cx="6" cy="6" r="5"/><path d="M4 4l4 4M8 4L4 8"/></svg>
                    <svg class="mt-3 h-9 w-9" viewBox="0 0 36 36" fill="none" stroke="#444" stroke-width="1.800"><path d="M18 3h13q2 0 2 2v13A15.500 15.500 0 1 1 18 3z"/><circle cx="18" cy="18" r="8.500"/><path d="M11 23l-5 5M25 23l5 5"/></svg>
                    <svg class="mt-2 h-1.5 w-2"><use href="#down"/></svg>
                    <div class="mt-1.5 h-px w-9 bg-[#666]"></div>
                    <svg class="mt-1.5 h-9 w-9" viewBox="0 0 36 36" fill="#c4c6c6" stroke="#333" stroke-width="1.800"><path d="M13 34C10 28 3 22 2 19c0-3 4-2 8 3L7 8c0-3 4-3 4 0l4 9-1-13c0-3 4-3 4 0l2 13 2-12c1-3 4-2 4 0l-1 14 3-8c2-3 5-1 4 2l-4 13-4 8z"/></svg>
                    <svg class="mt-1 h-9 w-9" viewBox="0 0 36 36" fill="none" stroke="#333" stroke-width="2"><path d="M2 2l22 22M24 2L2 24"/><path d="M1 1h7L1 8zM25 1h-7l7 7zM1 25v-7l7 7z" fill="#333" stroke="none"/><circle cx="25" cy="23" r="7" fill="#b4b6b6"/><path d="M29 28l6 6" stroke-width="4"/></svg>
                    <svg class="mt-2.5 h-1.5 w-2"><use href="#down"/></svg>
                    <svg class="mt-2 h-5 w-5" viewBox="0 0 20 20" fill="none" stroke="#333" stroke-width="2"><path d="M4 7l6-5 6 5-6 5z"/></svg>
                </div>

                <!-- командная строка -->
                <div class="absolute right-0 bottom-px left-[363px] flex h-[39px] items-center border border-[#6a6e70] bg-[#bcbebd]">
                    <div class="flex h-full w-[75px] items-center bg-linear-to-b from-[#6a6a6a] to-[#454545] pl-1">
                        <svg class="h-7 w-2" viewBox="0 0 8 28"><path d="M1 1v27M4 1v27M7 1v27" stroke="#aaa" stroke-width="1.500" stroke-dasharray="1.500 2.500"/></svg>
                        <button aria-label="关闭" class="ml-2"><svg class="h-3 w-3" viewBox="0 0 10 10"><path d="M0 0l10 10M10 0L0 10" stroke="#ddd" stroke-width="2.200"/></svg></button>
                        <button aria-label="自定义" class="ml-4"><svg class="h-5 w-5" viewBox="0 0 20 20"><path d="M9 9l9 9" stroke="#ddd" stroke-width="4" stroke-linecap="round"/><path d="M7 1l-3 0 3 4-1 2-3 0-2-3c-1 6 3 8 7 7l3-3c1-4-1-7-4-7z" fill="#ddd"/></svg></button>
                    </div>
                    <svg class="ml-1.5 h-5 w-[22px]" viewBox="0 0 22 20"><rect x="1" y="1" width="20" height="18" rx="2" fill="#b4bacb" stroke="#707a92" stroke-width="1.500"/><path d="M4 5l5 5-5 5M11 15h6" fill="none" stroke="#303a50" stroke-width="2"/></svg>
                    <svg class="ml-1 h-1.5 w-2 text-[#555]"><use href="#down"/></svg>
                    <input type="text" aria-label="命令行" placeholder="键入命令" class="ml-2 h-full grow bg-transparent px-1 italic outline-none placeholder:text-[#777]">
                </div>
            </div>

            <div class="mr-1 mb-auto ml-1.5 w-[35px] border-2 border-[#404040]">
                <div class="mx-1 mt-0.5 h-2 border-y border-[#3a3a3a]"></div>
                <div data-icons="erase copy mirror offset arrayd move rotate scale stretch trim extend brk1 brk2 rect fillet fillet spline" class="flex flex-col items-center [&>button]:h-[33px]"></div>
                <button aria-label="分解" class="h-[32px] w-full border border-[#2d4266] bg-[#5a7bb0]"></button>
            </div>
        </main>

        <!-- Вкладки листов -->
        <div class="flex h-[30px] shrink-0 items-start border-t-2 border-[#4a4a4a] bg-[#383838] pl-3 text-[16px]">
            <button class="relative h-[26px] w-[72px] font-bold"><svg class="absolute inset-0 h-full w-full" viewBox="0 0 72 26" preserveAspectRatio="none"><path d="M0 0c7 4 6 26 15 26h40c9 0 9-22 17-26z" fill="#747474"/></svg><span class="relative">模型</span></button>
            <button class="relative h-[26px] w-[72px] text-[#e0e0e0]"><svg class="absolute inset-0 h-full w-full" viewBox="0 0 72 26" preserveAspectRatio="none"><path d="M0 0c7 4 6 26 15 26h40c9 0 9-22 17-26z" fill="#5a5a5a"/></svg><span class="relative">布局1</span></button>
            <button class="relative h-[26px] w-[82px] text-[#e0e0e0]"><svg class="absolute inset-0 h-full w-full" viewBox="0 0 72 26" preserveAspectRatio="none"><path d="M0 0c7 4 6 26 15 26h40c9 0 9-22 17-26z" fill="#5a5a5a"/></svg><span class="relative">布局2</span></button>
            <button aria-label="新建布局" class="mt-px ml-0.5 flex h-[22px] w-8 items-center justify-center rounded-tl-xl rounded-br-xl bg-[#585858]"><svg class="h-3 w-3" viewBox="0 0 12 12"><path d="M6 0v12M0 6h12" stroke="#c8c8c8" stroke-width="2.500"/></svg></button>
        </div>

        <!-- Строка состояния -->
        <footer class="flex h-[43px] shrink-0 items-center bg-[#3a3a3a] pl-[155px]">
            <div class="flex h-full grow items-start gap-[3px] border-t-2 border-[#6f6f6f] bg-[#5e5e5e] pt-px pr-0.5 [&>div]:flex [&>div]:h-[37px] [&>div]:items-center [&>div]:border [&>div]:border-[#7b7b7b] [&>div]:bg-[#515151]">
                <div class="w-[256px] justify-center text-[16px] whitespace-nowrap">-1377.8896, 1519.4303, 0.0000</div>
                <div class="w-[39px] justify-center font-bold whitespace-nowrap">模型</div>
                <div data-icons="sgrid sdots down" data-status class="[&>button]:w-[34px]"></div>
                <div data-icons="sinfer | sdyn | sortho spolar down siso down | strack sosnap down | slw | strans | scyc | s3d down" data-status class="[&>button]:w-[35px]"></div>
                <div data-icons="sucs scube down gizmo down" data-status class="[&>button]:w-[33px]"></div>
                <div class="pr-1.5">
                    <div data-icons="sanno sauto sscale" class="flex [&>button]:w-[34px]"></div>
                    <select aria-label="注释比例" class="ml-1 w-20 appearance-none text-[16px] whitespace-nowrap"><option>1:1 / 100%</option></select>
                    <svg class="ml-1 h-2 w-2.5"><use href="#down"/></svg>
                </div>
                <div class="grow justify-end pr-1"><button aria-label="自定义"><svg class="h-5 w-6" viewBox="0 0 24 20"><path d="M0 2h24M0 10h24M0 18h24" stroke="#e0e0e0" stroke-width="2.500"/></svg></button></div>
            </div>
        </footer>
    </div>

    <!-- Подсказка -->
    <div role="tooltip" class="absolute top-[736px] right-0 h-[167px] w-[234px] overflow-hidden border border-r-0 border-[#8c8c8c] bg-[#f2f3f6] pt-3 pl-2 whitespace-nowrap text-[#444]">
        <p class="font-bold">分解</p>
        <p class="mt-2.5">将复合对象分解为其部件对象</p>
        <div class="-ml-1.5 mt-3.5 h-px bg-[#aaa]"></div>
        <div class="mt-2 h-5 w-5 border-t-4 border-[#2f3f9c] bg-[#dfe3f4]"></div>
    </div>
    <svg class="absolute top-[902px] right-2.5 h-8 w-5" viewBox="0 0 20 32"><path d="M2 2v23l5-5 4 10 4-2-4-10h7z" fill="#fff" stroke="#222" stroke-width="1.500"/></svg>

    <!-- Логотип сайта -->
    <div class="absolute right-[35px] bottom-[5px] flex h-[242px] w-[485px] items-center bg-[#fefefe] pl-10 text-black">
        <svg class="h-[106px] w-[130px] shrink-0" viewBox="0 0 130 106">
            <path d="M13 47C28 18 62 -2 92 3c28 4 38 20 28 46l-4-1c4-22-8-34-32-36C58 10 32 24 13 47z" fill="#8fbc2a"/>
            <path d="M10 56C-2 76 8 102 38 105c38 3 76-22 91-62C112 72 78 92 46 92 22 92 8 78 10 56z" fill="#173f96"/>
            <path d="M65 18l24 12v14l-12 6v34H65zM100 44l20 8c-4 8-10 14-20 20z" fill="#dcdce0"/>
            <path d="M40 28l22-12v68H40z" fill="url(#gtower)"/>
            <path d="M11 64l19-10v28C20 80 14 74 11 64zM76 50l19-10v32c-6 4-11 6-19 8z" fill="#1b4296"/>
        </svg>
        <div class="ml-0.5 pt-4 italic whitespace-nowrap">
            <p class="text-[53px] leading-10 font-black">土木工程网</p>
            <p class="font-['Noto_Sans_CJK_SC'] text-[33px] leading-9 font-medium">www.civilcn.com</p>
        </div>
    </div>

    <!-- Водяной знак видео -->
    <svg class="absolute top-[62px] left-[66px] h-[76px] w-[296px]" viewBox="0 0 296 76">
        <g fill="#fff" stroke="#2b2b2b" stroke-width="8" stroke-linejoin="round" paint-order="stroke" font-weight="700">
            <text x="4" y="56" font-size="54" font-style="italic">秒</text>
            <text x="64" y="58" font-size="52" font-weight="600">d</text>
            <text x="122" y="58" font-size="50" font-weight="600">ng</text>
            <text x="178" y="56" font-size="52" font-style="italic">视频</text>
        </g>
        <circle cx="111" cy="43" r="15" fill="#3d8bf2" stroke="#2b2b2b" stroke-width="1.500"/><path d="M106 34l13 9-13 9z" fill="#fff"/>
        <path d="M110 14l5 6 8-6" fill="none" stroke="#ffe92e" stroke-width="4"/>
    </svg>

    <script>
        // Пункты меню и вкладки ленты
        document.querySelectorAll('[data-menu]').forEach(el => {
            el.innerHTML = el.dataset.menu.split(' ').map(t => `<button class="whitespace-nowrap">${t}</button>`).join('');
        });

        // Кнопки панелей инструментов по списку иконок
        document.querySelectorAll('[data-icons]').forEach(el => {
            const status = 'status' in el.dataset;
            el.innerHTML = el.dataset.icons.split(' ').map(name => {
                if (name === '|') {
                    return '<span class="-mr-px h-full w-px bg-[#7b7b7b]"></span>';
                }
                if (name === 'down') {
                    return status
                        ? '<button aria-label="more" class="flex h-full w-[21px]! items-center justify-center"><svg class="h-2 w-2.5"><use href="#down"/></svg></button>'
                        : '<button aria-label="more" class="flex items-center justify-center"><svg class="h-1.5 w-2 shrink-0"><use href="#down"/></svg></button>';
                }
                if (name === 'text') {
                    return '<button class="flex items-center justify-center text-[28px] leading-6 font-semibold">A</button>';
                }
                return `<button aria-label="${name}" class="flex items-center justify-center"><svg class="h-6 w-6 shrink-0"><use href="#${name}"/></svg></button>`;
            }).join('');
        });
    </script>
</body>
</html>
